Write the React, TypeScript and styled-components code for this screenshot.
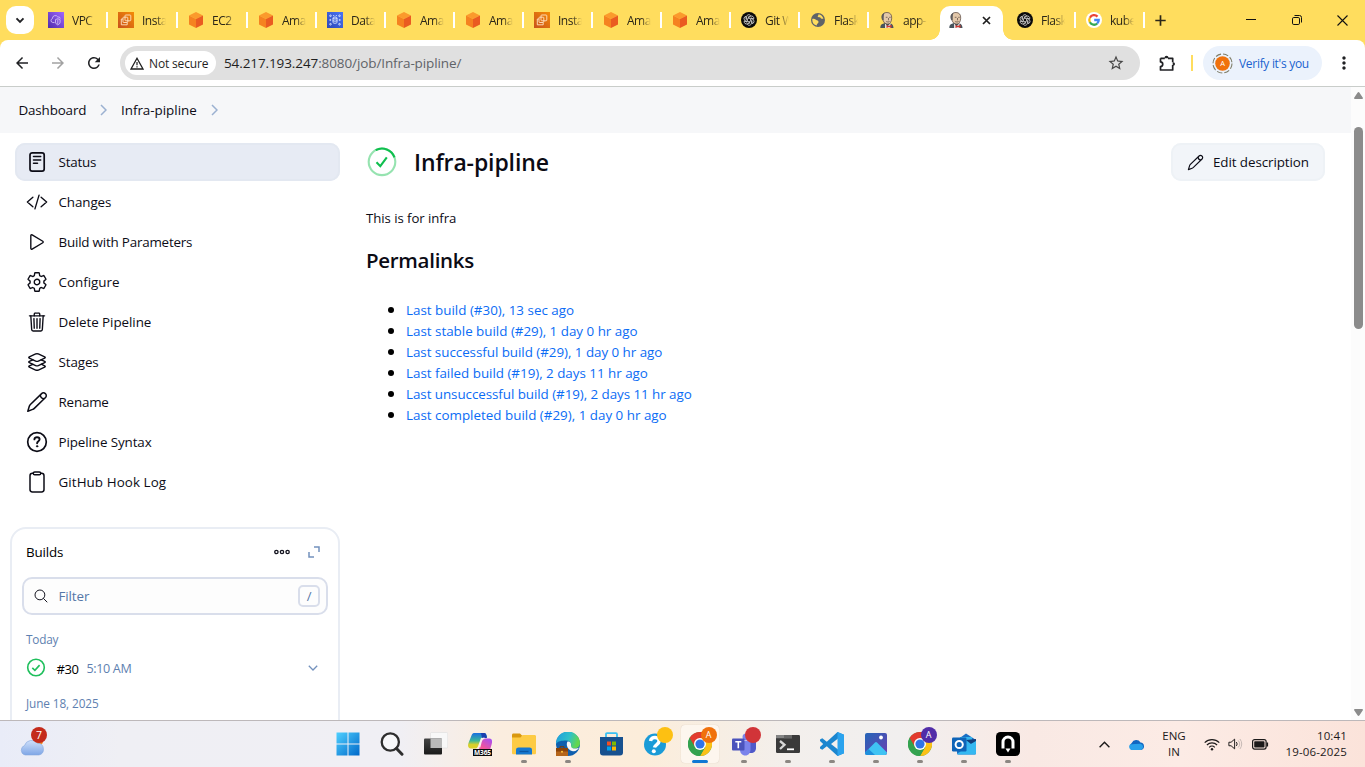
import React from 'react';
import styled, { createGlobalStyle, css } from 'styled-components';
import {
  IoCodeSlashOutline,
  IoPlayOutline,
  IoSettingsOutline,
  IoTrashOutline,
  IoLayersOutline,
  IoSearchOutline,
} from 'react-icons/io5';
import { MdArrowBack, MdArrowForward, MdRefresh, MdStarBorder, MdMoreVert } from 'react-icons/md';

const Global = createGlobalStyle`
  * { box-sizing: border-box; }
  html, body { margin: 0; padding: 0; }
  body { font-family: "Open Sans", "Noto Sans", sans-serif; color: #0c0c16; background: #fff; overflow: hidden; }
`;

const Screen = styled.div`
  width: 1365px;
  height: 767px;
  display: flex;
  flex-direction: column;
  overflow: hidden;
`;

/* ---------- browser frame ---------- */

const TabStrip = styled.div`
  height: 40px;
  flex: none;
  display: flex;
  align-items: center;
  background: #ffdd5e;
  padding-left: 6px;
`;

const TabSearch = styled.div`
  width: 28px;
  height: 28px;
  border-radius: 10px;
  background: #fff;
  display: flex;
  align-items: center;
  justify-content: center;
  margin-right: 2px;
`;

const Tab = styled.div<{ $w: number; $sep: boolean; $inset: number }>`
  width: ${p => p.$w}px;
  height: 16px;
  flex: none;
  display: flex;
  align-items: center;
  gap: 8px;
  padding-left: ${p => p.$inset}px;
  border-right: 2px solid ${p => (p.$sep ? '#fff' : 'transparent')};
  svg { flex: none; }
`;

const TabTitle = styled.span`
  width: 24px;
  padding-top: 1px;
  font-size: 12px;
  line-height: 16px;
  letter-spacing: -0.5px;
  white-space: nowrap;
  overflow: hidden;
  color: #2b2618;
  mask-image: linear-gradient(90deg, #000 58%, transparent 100%);
`;

const ActiveTab = styled.div`
  position: relative;
  align-self: flex-end;
  width: 63px;
  height: 34px;
  flex: none;
  margin: 0 0 0 2px;
  border-radius: 10px 10px 0 0;
  background: #fff;
  display: flex;
  align-items: center;
  padding: 0 12px 6px 8px;
  justify-content: space-between;
  &::before, &::after {
    content: '';
    position: absolute;
    bottom: 0;
    width: 10px;
    height: 10px;
  }
  &::before { left: -10px; background: radial-gradient(circle at 0 0, transparent 9.5px, #fff 10px); }
  &::after { right: -10px; background: radial-gradient(circle at 100% 0, transparent 9.5px, #fff 10px); }
`;

const NewTab = styled.div`
  width: 31px;
  display: flex;
  justify-content: center;
`;

const WindowControls = styled.div`
  margin-left: auto;
  display: flex;
`;

const WindowButton = styled.div`
  width: 46px;
  height: 40px;
  display: flex;
  align-items: center;
  justify-content: center;
  &:last-child { width: 45px; }
`;

const ToolbarBack = styled.div`
  flex: none;
  background: #ffdd5e;
`;

const Toolbar = styled.div`
  height: 47px;
  background: #fff;
  border-radius: 8px 8px 0 0;
  border-bottom: 1px solid #c9cdca;
  display: flex;
  align-items: center;
  padding: 0 11px 0 4px;
`;

const NavButton = styled.div<{ $dim?: boolean }>`
  width: 36px;
  flex: none;
  display: flex;
  justify-content: center;
  color: ${p => (p.$dim ? '#a2a2a2' : '#202124')};
`;

const Omnibox = styled.div`
  width: 1020px;
  height: 34px;
  flex: none;
  margin-left: 8px;
  border-radius: 17px;
  background: #e0e0e0;
  display: flex;
  align-items: center;
  padding: 0 15px 0 5px;
  & > svg:last-child { margin-left: auto; }
`;

const SecurityChip = styled.div`
  width: 91px;
  height: 24px;
  border-radius: 12px;
  background: #fff;
  display: flex;
  align-items: center;
  gap: 5px;
  padding-left: 5px;
  font-size: 12px;
  font-weight: 500;
  letter-spacing: -0.15px;
  white-space: nowrap;
  color: #1f1f1f;
`;

const Url = styled.div`
  margin-left: 8px;
  font-size: 13.5px;
  letter-spacing: -0.1px;
  color: #5f6368;
  white-space: nowrap;
  b { font-weight: 400; color: #1f1f1f; }
`;

const ExtensionsButton = styled.div`
  width: 36px;
  flex: none;
  margin-left: 9px;
  display: flex;
  justify-content: center;
`;

const ToolbarDivider = styled.div`
  width: 2px;
  height: 16px;
  flex: none;
  background: #ffdd5e;
  margin: 0 10px 0 6px;
`;

const ProfileChip = styled.div`
  width: 119px;
  height: 34px;
  flex: none;
  border-radius: 17px;
  background: #ebf2fc;
  display: flex;
  align-items: center;
  gap: 6px;
  padding-left: 9px;
  color: #1a63cf;
  font-size: 12px;
  letter-spacing: -0.3px;
  white-space: nowrap;
`;

const MenuDots = styled.div`
  margin-left: auto;
  display: flex;
`;

/* ---------- jenkins page ---------- */

const Viewport = styled.div`
  height: 633px;
  flex: none;
  display: flex;
  overflow: hidden;
`;

const Page = styled.div`
  width: 1351px;
  display: flex;
  flex-direction: column;
`;

const Scrollbar = styled.div`
  width: 14px;
  background: #fcfcfc;
  display: flex;
  flex-direction: column;
  align-items: center;
  padding: 5px 0 4px 1px;
`;

const ScrollThumb = styled.div`
  width: 9px;
  height: 202px;
  margin: 28px 0 auto;
  border-radius: 5px;
  background: #8b8b8b;
`;

const Breadcrumbs = styled.div`
  height: 46px;
  flex: none;
  background: #f6f7f9;
  display: flex;
  align-items: center;
  gap: 14px;
  padding-left: 18.5px;
  font-size: 13.4px;
`;

const Crumb = styled.span<{ $w: number; $ls: number }>`
  width: ${p => p.$w}px;
  white-space: nowrap;
  letter-spacing: ${p => p.$ls}px;
`;

const Columns = styled.div`
  display: flex;
  flex: 1;
`;

const Sidebar = styled.div`
  width: 340px;
  padding-top: 10px;
`;

const TaskList = styled.div`
  display: flex;
  flex-direction: column;
  gap: 2px;
  padding-left: 15px;
`;

const Task = styled.div<{ $active?: boolean; $ls?: number }>`
  height: 38px;
  border-radius: 10px;
  display: flex;
  align-items: center;
  gap: 10.5px;
  padding-left: 11px;
  font-size: 13.4px;
  letter-spacing: ${p => p.$ls ?? -0.1}px;
  ${p =>
    p.$active &&
    css`
      background: #e7ebf4;
      box-shadow: inset 0 0 0 2px #e3e8f1;
    `}
  svg { width: 22px; height: 22px; flex: none; }
`;

const BuildsCard = styled.div`
  margin: 26px 0 0 10px;
  height: 220px;
  border: 2px solid #e9edf4;
  border-radius: 16px;
  padding: 9px 10px 0;
`;

const CardHeader = styled.div`
  height: 28px;
  display: flex;
  align-items: center;
  padding: 0 8px 0 4px;
  font-size: 13.4px;
  letter-spacing: -0.15px;
  color: #000;
  svg:first-of-type { margin: 0 18px 0 auto; }
`;

const FilterBox = styled.div`
  height: 38px;
  margin-top: 11px;
  border: 2px solid #d9deeb;
  border-radius: 10px;
  background: #fdfdfd;
  display: flex;
  align-items: center;
  gap: 9.5px;
  padding: 0 6px 0 9px;
  font-size: 13.4px;
  letter-spacing: -0.1px;
  color: #5577a8;
`;

const KeyHint = styled.span`
  margin-left: auto;
  width: 22px;
  height: 22px;
  border: 2px solid #d9deeb;
  border-radius: 5px;
  display: flex;
  align-items: center;
  justify-content: center;
  font-size: 13px;
`;

const DayLabel = styled.div<{ $mt: number; $ls: number }>`
  margin-top: ${p => p.$mt}px;
  padding-left: 4px;
  height: 18px;
  line-height: 18px;
  font-size: 11.8px;
  letter-spacing: ${p => p.$ls}px;
  color: #5e7fb0;
`;

const BuildRow = styled.div`
  height: 28px;
  margin-top: 6px;
  display: flex;
  align-items: center;
  padding: 0 10px 0 4px;
  font-size: 13px;
  letter-spacing: -0.45px;
  color: #000;
  span { margin-left: 10.5px; padding-top: 1px; }
  time { margin-left: 8px; padding-top: 1px; color: #5e7fb0; font-size: 12.6px; letter-spacing: -0.35px; }
  & > svg:last-child { margin-left: auto; }
`;

const Main = styled.div`
  flex: 1;
  padding: 10px 26px 0 26px;
`;

const TitleBar = styled.div`
  height: 38px;
  display: flex;
  align-items: center;
  gap: 16px;
`;

const Title = styled.h1`
  margin: 0;
  font-size: 23px;
  font-weight: 600;
  letter-spacing: -0.12px;
  color: #0b0b14;
`;

const EditButton = styled.div`
  margin-left: auto;
  width: 154px;
  height: 38px;
  border-radius: 10px;
  background: #f2f5f9;
  box-shadow: inset 0 0 0 2px #eef2f6;
  display: flex;
  align-items: center;
  gap: 9px;
  padding-left: 16px;
  font-size: 13.4px;
  letter-spacing: -0.08px;
  white-space: nowrap;
`;

const Description = styled.div`
  margin-top: 27px;
  height: 20px;
  line-height: 20px;
  font-size: 13.2px;
  letter-spacing: -0.05px;
`;

const SectionTitle = styled.h2`
  margin: 18px 0 0;
  height: 30px;
  line-height: 29px;
  font-size: 20.5px;
  font-weight: 600;
  letter-spacing: -0.3px;
  color: #0b0b14;
`;

const Permalinks = styled.ul`
  margin: 23px 0 0;
  padding-left: 40px;
  line-height: 21px;
  font-size: 13.4px;
`;

const Permalink = styled.li<{ $ls: number }>`
  height: 21px;
  &::marker { font-size: 16px; color: #000; }
  a { color: #0b6cf5; letter-spacing: ${p => p.$ls}px; }
`;

/* ---------- taskbar ---------- */

const Taskbar = styled.div`
  height: 47px;
  flex: none;
  border-top: 1px solid #bdb8ba;
  background: linear-gradient(90deg, #e9ecf8 0, #efeff4 120px, #f0eff4 400px, #fbeddf 500px, #fcedda 640px, #f3efec 790px, #f1efef 900px, #f9e9e4 1030px, #fcebe5 1180px, #fbe3da 1365px);
  display: flex;
  align-items: center;
`;

const Widgets = styled.div`
  width: 325.500px;
  padding-left: 19px;
  height: 46px;
`;

const AppSlot = styled.div<{ $state?: 'open' | 'active' }>`
  position: relative;
  width: 44px;
  height: 46px;
  display: flex;
  align-items: center;
  justify-content: center;
  ${p =>
    p.$state === 'active' &&
    css`
      &::before {
        content: '';
        position: absolute;
        inset: 4px 3px;
        border-radius: 4px;
        background: #fdf6ee;
        box-shadow: 0 0 1px #cdbfb0;
      }
    `}
  ${p =>
    p.$state &&
    css`
      &::after {
        content: '';
        position: absolute;
        bottom: 4px;
        left: 50%;
        transform: translateX(-50%);
        width: ${p.$state === 'active' ? 16 : 6}px;
        height: 3px;
        border-radius: 2px;
        background: ${p.$state === 'active' ? '#0f78d4' : '#8c8782'};
      }
    `}
  svg { position: relative; }
`;

const Badge = styled.span<{ $bg: string; $x?: number }>`
  position: absolute;
  left: ${p => p.$x ?? 23}px;
  top: 6px;
  width: 16px;
  height: 16px;
  border-radius: 50%;
  background: ${p => p.$bg};
  color: #fff;
  font-size: 9px;
  line-height: 16px;
  text-align: center;
`;

const CountBadge = styled(Badge)`
  font-size: 10.5px;
`;

const WidgetIcon = styled.div`
  position: relative;
  width: 30px;
  height: 46px;
`;

const Tray = styled.div`
  margin-left: auto;
  height: 46px;
  display: flex;
  align-items: center;
  padding-right: 18px;
  color: #1c1a1a;
`;

const TrayItem = styled.div<{ $w: number }>`
  width: ${p => p.$w}px;
  display: flex;
  justify-content: center;
`;

const TrayText = styled.div<{ $w: number; $align: string; $size: number; $ls: number }>`
  width: ${p => p.$w}px;
  text-align: ${p => p.$align};
  font-size: ${p => p.$size}px;
  line-height: 16px;
  letter-spacing: ${p => p.$ls}px;
  white-space: nowrap;
`;

/* ---------- tab icons ---------- */

const CubeIcon = () => (
  <svg width="16" height="16" viewBox="0 0 16 16">
    <path d="M8 0l7 3.4L8 7 1 3.4z" fill="#fb9a2c" />
    <path d="M1 3.4L8 7v9l-7-3.6z" fill="#f58220" />
    <path d="M15 3.4L8 7v9l7-3.6z" fill="#ea5b21" />
  </svg>
);
const VpcIcon = () => (
  <svg width="16" height="16" viewBox="0 0 16 16">
    <defs><linearGradient id="vp" x1="0" y1="1" x2="1" y2="0"><stop stopColor="#4f2cab" /><stop offset="1" stopColor="#a166ff" /></linearGradient></defs>
    <rect width="16" height="16" fill="url(#vp)" />
    <path d="M6.500 10.500H4.800A2 2 0 0 1 4.400 6.600A2.900 2.900 0 0 1 9.800 5a2 2 0 0 1 2.500 1.500M7.500 7.600l2.300-.9 2.300.9v2.400c0 1.500-1 2.300-2.300 2.900C8.500 12.300 7.500 11.500 7.500 10zM9.800 7.500v4.500" fill="none" stroke="#dccdfb" strokeWidth=".8" />
  </svg>
);
const Ec2Icon = () => (
  <svg width="16" height="16" viewBox="0 0 16 16">
    <defs><linearGradient id="ec" x1="0" y1="1" x2="1" y2="0"><stop stopColor="#c8511b" /><stop offset="1" stopColor="#f58b06" /></linearGradient></defs>
    <rect width="16" height="16" fill="url(#ec)" />
    <g fill="none" stroke="#ffe3c4" strokeWidth=".9"><rect x="7" y="3" width="5.800" height="5.800" rx=".8" /><path d="M5 7H3.300v5.800h5.900V11" /><rect x="5" y="5.200" width="4.800" height="5.300" rx=".6" /></g>
  </svg>
);
const RdsIcon = () => (
  <svg width="16" height="16" viewBox="0 0 16 16">
    <defs><linearGradient id="rd" x1="0" y1="1" x2="1" y2="0"><stop stopColor="#2e48b8" /><stop offset="1" stopColor="#4a74f5" /></linearGradient></defs>
    <rect width="16" height="16" fill="url(#rd)" />
    <g fill="none" stroke="#e2eaff" strokeWidth=".9"><ellipse cx="8" cy="6" rx="2" ry="1" /><path d="M6 6v4.300c0 .6.900 1 2 1s2-.4 2-1V6M6 8.200c0 .6.900 1 2 1s2-.4 2-1" /><circle cx="3.500" cy="3.800" r=".8" /><circle cx="12.500" cy="3.800" r=".8" /><circle cx="3.500" cy="12.200" r=".8" /><circle cx="12.500" cy="12.200" r=".8" /><circle cx="3.300" cy="8" r=".6" /><circle cx="12.700" cy="8" r=".6" /><path d="M6.200 3.500h1M8.800 3.500h1" /></g>
  </svg>
);
const GptIcon = () => (
  <svg width="16" height="16" viewBox="0 0 16 16">
    <circle cx="8" cy="8" r="8" fill="#0a0a0a" />
    <g fill="none" stroke="#dcdcdc" strokeWidth=".75">
      {[0, 60, 120, 180, 240, 300].map(a => (
        <path key={a} transform={`rotate(${a} 8 8)`} d="M8 6.100L5.600 7.400V5A2.200 2.200 0 0 1 9.600 3.600L7 5.200" />
      ))}
    </g>
  </svg>
);
const GlobeIcon = () => (
  <svg width="16" height="16" viewBox="0 0 16 16">
    <circle cx="8" cy="8" r="7" fill="#5f6368" />
    <path d="M2.300 7c1.500-.4 2.700 0 3.700.8S8.500 8.500 8.500 10s-1.800 1.500-1.800 3.500C4 13 2.300 11 2.300 8zM8.500 2.200c.3 1.300-1.300 1.600-.7 2.600s2.200-.2 2.700 1 1.300 1 2.900 1C13 4.500 11 2.500 8.500 2.200z" fill="#ffdd5e" />
  </svg>
);
const JenkinsIcon = () => (
  <svg width="16" height="16" viewBox="0 0 16 16">
    <path d="M1.300 16c0-2.800 1-4 2.700-4.300l2-.7 5.500.6c2 .4 2.800 1.900 3 4.400z" fill="#48545c" />
    <path d="M6 11l2.500 3.500 3-3.500v5H6z" fill="#dfe2e2" />
    <path d="M3.400 5.500C2.800 2 5 .5 8 .5s5 2 4.700 5.700c-.2 3.600-1.700 5.900-3.900 5.900S4.500 10.500 4.200 8.500z" fill="#e3c8aa" stroke="#54433c" strokeWidth=".7" />
    <path d="M3.400 8.300C1.700 5.500 2.400 1.500 5.600.7 4.600 2.500 4.900 4.700 4.600 8z" fill="#5d5b5d" />
    <path d="M6.800 5.300h1.700M10.200 5.300h1.500M9.500 6v2.300M7.200 9.600q1.800.9 3.500 0" stroke="#54433c" strokeWidth=".7" fill="none" />
    <path d="M7.500 13l2.300 1 2.700-1.200v3L9.800 15l-2.300.9z" fill="#d33833" />
  </svg>
);
const GoogleIcon = () => (
  <svg width="16" height="16" viewBox="0 0 16 16">
    <circle cx="8" cy="8" r="8" fill="#fff" />
    <g fill="none" strokeWidth="2.300">
      <path d="M11.500 4.600A4.700 4.700 0 0 0 3.900 5.700" stroke="#ea4335" />
      <path d="M3.900 5.700a4.700 4.700 0 0 0 0 4.700" stroke="#fbbc05" />
      <path d="M3.900 10.300a4.700 4.700 0 0 0 7.300 1.200" stroke="#34a853" />
      <path d="M11.200 11.500A4.700 4.700 0 0 0 12.700 8H8.200" stroke="#4285f4" />
    </g>
  </svg>
);
const tabIcons = { cube: CubeIcon, vpc: VpcIcon, ec2: Ec2Icon, rds: RdsIcon, gpt: GptIcon, globe: GlobeIcon, jenkins: JenkinsIcon, google: GoogleIcon };

type TabData = { icon: keyof typeof tabIcons; title: string; w?: number; inset?: number };
const tabsBefore: TabData[] = [
  { icon: 'vpc', title: 'VPC', w: 72, inset: 12 },
  { icon: 'ec2', title: 'Insta', w: 70 },
  { icon: 'cube', title: 'EC2', w: 70 },
  { icon: 'cube', title: 'Ama' },
  { icon: 'rds', title: 'Data' },
  { icon: 'cube', title: 'Ama' },
  { icon: 'cube', title: 'Ama' },
  { icon: 'ec2', title: 'Insta' },
  { icon: 'cube', title: 'Ama' },
  { icon: 'cube', title: 'Ama' },
  { icon: 'gpt', title: 'Git W' },
  { icon: 'globe', title: 'Flask' },
  { icon: 'jenkins', title: 'app-' },
];
const tabsAfter: TabData[] = [
  { icon: 'gpt', title: 'Flask', w: 73, inset: 14 },
  { icon: 'google', title: 'kube' },
];

const TabItem = ({ tab, sep = true }: { tab: TabData; sep?: boolean }) => {
  const Icon = tabIcons[tab.icon];
  return (
    <Tab $w={tab.w ?? 69} $sep={sep} $inset={tab.inset ?? 10}>
      <Icon />
      <TabTitle>{tab.title}</TabTitle>
    </Tab>
  );
};

/* ---------- page icons ---------- */

const StatusDoc = () => (
  <svg viewBox="0 0 22 22" fill="none" stroke="currentColor" strokeLinecap="round">
    <rect x="4" y="1.800" width="14.200" height="18.400" rx="2.200" strokeWidth="1.700" />
    <path d="M7.500 5.500h7.200M7.500 9h7.200M7.500 12.200h4" strokeWidth="1.500" />
  </svg>
);
const Pencil = ({ size = 22 }: { size?: number }) => (
  <svg width={size} height={size} viewBox="0 0 22 22" fill="none" stroke="currentColor" strokeWidth="1.500" strokeLinejoin="round">
    <path d="M1.800 20.200l1.500-4.900c.2-.7.600-1.300 1.100-1.800L15.600 2.600a2.600 2.600 0 0 1 3.700 0l.2.200a2.600 2.600 0 0 1 0 3.700L8.300 17.400c-.5.500-1 .8-1.600 1z" />
    <path d="M14.300 4c.2 2.200 1.600 3.600 3.800 3.800" />
  </svg>
);
const Help = () => (
  <svg viewBox="0 0 22 22" fill="none" stroke="currentColor" strokeLinecap="round">
    <circle cx="11" cy="11" r="9.300" strokeWidth="1.700" />
    <path d="M8.400 8.400c0-1.300 1.100-2.100 2.600-2.100s2.600.8 2.600 2c0 1.800-2.500 1.900-2.500 3.900" strokeWidth="1.900" />
    <circle cx="11.100" cy="15.300" r=".7" fill="currentColor" strokeWidth=".9" />
  </svg>
);
const Clipboard = () => (
  <svg viewBox="0 0 22 22" fill="none" stroke="currentColor" strokeWidth="1.500">
    <rect x="4" y="2.300" width="14" height="18.600" rx="2.400" />
    <rect x="7.300" y=".9" width="7.400" height="2.900" rx="1.400" fill="#fff" />
  </svg>
);
const Chevron = ({ down }: { down?: boolean }) =>
  down ? (
    <svg width="10" height="6" viewBox="0 0 10 6"><path d="M.8.800L5 5l4.200-4.200" fill="none" stroke="#7391bd" strokeWidth="1.300" /></svg>
  ) : (
    <svg width="7" height="12" viewBox="0 0 7 12"><path d="M1 1l5 5-5 5" fill="none" stroke="#9bb1d1" strokeWidth="1.500" /></svg>
  );

const tasks = [
  { label: 'Status', icon: <StatusDoc />, active: true, ls: -0.2 },
  { label: 'Changes', icon: <IoCodeSlashOutline /> },
  { label: 'Build with Parameters', icon: <IoPlayOutline />, ls: -0.2 },
  { label: 'Configure', icon: <IoSettingsOutline />, ls: 0 },
  { label: 'Delete Pipeline', icon: <IoTrashOutline />, ls: -0.05 },
  { label: 'Stages', icon: <IoLayersOutline /> },
  { label: 'Rename', icon: <Pencil />, ls: -0.2 },
  { label: 'Pipeline Syntax', icon: <Help /> },
  { label: 'GitHub Hook Log', icon: <Clipboard />, ls: 0.08 },
];

const links: [string, number][] = [
  ['Last build (#30), 13 sec ago', 0],
  ['Last stable build (#29), 1 day 0 hr ago', -0.01],
  ['Last successful build (#29), 1 day 0 hr ago', -0.04],
  ['Last failed build (#19), 2 days 11 hr ago', -0.02],
  ['Last unsuccessful build (#19), 2 days 11 hr ago', -0.06],
  ['Last completed build (#29), 1 day 0 hr ago', 0],
];

/* ---------- taskbar icons ---------- */

const S = ({ children, w = 24 }: { children: React.ReactNode; w?: number }) => (
  <svg width={w} height={w} viewBox="0 0 24 24">{children}</svg>
);
const ChromeIcon = () => (
  <S>
    <circle cx="12" cy="12" r="12" fill="#34a24f" />
    <path d="M12 12L1.600 6A12 12 0 0 1 22.400 6z" fill="#e33b2e" />
    <path d="M12 12L22.400 6A12 12 0 0 1 12 24l5.200-9z" fill="#fbc116" />
    <path d="M12 6h10.400L17.200 15z" fill="#fbc116" />
    <path d="M1.600 6L12 6v6l-5.200 3z" fill="#e33b2e" />
    <path d="M1.600 6l5.200 9L12 24l5.200-9H7z" fill="#34a24f" />
    <path d="M1.600 6A12 12 0 0 0 12 24l-5.200-9z" fill="#34a24f" />
    <circle cx="12" cy="12" r="6" fill="#fff" />
    <circle cx="12" cy="12" r="4.600" fill="#2f74e8" />
  </S>
);
const StartIcon = () => (
  <S>
    <defs><linearGradient id="st" x1="0" y1="0" x2="1" y2="1"><stop stopColor="#4fd0ff" /><stop offset="1" stopColor="#0068c9" /></linearGradient></defs>
    <path d="M.5.500h11v11H.5zM12.500.5h11v11h-11zM.5 12.500h11v11H.5zM12.500 12.500h11v11h-11z" fill="url(#st)" />
  </S>
);
const SearchIcon = () => (
  <S><circle cx="10.300" cy="10" r="8.600" fill="#f8f8fa" stroke="#2e2e2e" strokeWidth="2.300" /><path d="M16.500 16.500l5.500 5.700" stroke="#2e2e2e" strokeWidth="3" strokeLinecap="round" /></S>
);
const TaskViewIcon = () => (
  <S>
    <defs><linearGradient id="tv" x1="0" y1="0" x2="0" y2="1"><stop stopColor="#444" /><stop offset="1" stopColor="#191919" /></linearGradient></defs>
    <rect x="6.500" y=".5" width="17.200" height="15.500" rx="1" fill="#f8f8f8" stroke="#dedede" strokeWidth=".6" />
    <rect x="0" y="6.500" width="18" height="16" rx="1" fill="url(#tv)" />
    <path d="M6.500 6.500H18V16H6.500z" fill="#b9b9b9" />
  </S>
);
const CopilotIcon = () => (
  <S>
    <defs>
      <linearGradient id="c1" x1="0" y1="0" x2="0" y2="1"><stop stopColor="#1a6fe0" /><stop offset=".5" stopColor="#3bb89a" /><stop offset=".75" stopColor="#d8d02a" /></linearGradient>
      <linearGradient id="c2" x1=".8" y1="0" x2=".3" y2=".7"><stop stopColor="#a84ff0" /><stop offset="1" stopColor="#f2559a" /></linearGradient>
    </defs>
    <path d="M7 1h9c2 0 2.500 1.500 3 4l-6 1-2.500 7c-1 3-2 3.500-4 3.500H3C0 16.500-.5 13.500.500 11l3-7.500C4.300 1.600 5 1 7 1z" fill="url(#c1)" />
    <path d="M12 1h4c2 0 2.500 2 3 5h-4c-2 0-1-5-3-5z" fill="#1b3fae" />
    <path d="M16 6.500h5.500c2.500 0 3 2.500 2.200 5.500l-2 7H10.500l2.500-9c.8-2.500 1.500-3.500 3-3.500z" fill="url(#c2)" />
    <path d="M16.500 6.300c-2.300 0-3 1.500-3.700 4l-1.300 5" stroke="#f7eeee" strokeWidth="1.600" fill="none" />
    <rect x="5" y="17" width="19" height="7" fill="#0b0b0b" />
    <text x="14.500" y="23" fontSize="6.500" fontWeight="700" fill="#fff" textAnchor="middle" fontFamily="Open Sans" textLength="17">M365</text>
  </S>
);
const FolderIcon = () => (
  <S>
    <path d="M0 3c0-1 .5-1.600 1.500-1.600H8L10.500 4H24v6H0z" fill="#d9980f" />
    <path d="M0 5.500h8.500l2-2.500h12c1 0 1.500.6 1.500 1.500V21c0 .8-.5 1.300-1.500 1.300H1.500C.5 22.300 0 21.800 0 21z" fill="#fdcb45" />
    <path d="M4 22.500V18c0-1.700 1-2.500 2.500-2.500h11c1.500 0 2.500.8 2.500 2.500v4.500z" fill="#1678cf" /><path d="M7.500 19.500h9" stroke="#0b57a4" strokeWidth="1.300" />
  </S>
);
const EdgeIcon = () => (
  <S>
    <defs><linearGradient id="ed" x1="0" y1="0" x2="1" y2=".3"><stop stopColor="#1c9be0" /><stop offset=".6" stopColor="#2fc1c8" /><stop offset="1" stopColor="#63d64e" /></linearGradient></defs>
    <circle cx="12" cy="12" r="12" fill="#0f5fae" />
    <path d="M0 12A12 12 0 0 1 24 11c0 4-3 5.500-6 5.500-2.500 0-3.500-1-3-2.500 1-3-1-5.500-5-5.500S1.500 9 0 12z" fill="url(#ed)" />
    <path d="M11.500 9.500c3 0 4 2 3.500 4.500 0 2 2 2.600 4 2.600 1.500 0 3-.4 4-1-1 2.500-4 4.400-7 3.400-4-1-6.500-6-4.500-9.500z" fill="#f7f6f4" />
    <rect x="0" y="16" width="12" height="8" fill="#b5651a" /><path d="M0 16h12v3.500H0z" fill="#8a4309" /><circle cx="6" cy="19.800" r="1" fill="#ffc83d" /><path d="M4 16v-1.300h4V16" fill="none" stroke="#7a3b08" />
  </S>
);
const StoreIcon = () => (
  <S>
    <path d="M6 5V2.200c0-.6.4-1 1-1h9c.6 0 1 .4 1 1V5" fill="none" stroke="#3ac0f2" strokeWidth="1.800" />
    <path d="M0 5h23v15.500c0 2-1 3-3 3H3c-2 0-3-1-3-3z" fill="#17518f" />
    <path d="M7 9.500h4v4H7z" fill="#f25022" /><path d="M12 9.500h4v4h-4z" fill="#7fba00" /><path d="M7 14.500h4v4H7z" fill="#00a4ef" /><path d="M12 14.500h4v4h-4z" fill="#ffb900" />
  </S>
);
const HelpAppIcon = () => (
  <S><circle cx="11" cy="12.500" r="11" fill="#1a9bd7" /><path d="M6.500 9c.5-5 9-4.500 8.500.5-.3 3-4 3-4.500 6" fill="none" stroke="#fff" strokeWidth="3.400" /><circle cx="9.800" cy="19.300" r="2" fill="#fff" /></S>
);
const TeamsIcon = () => (
  <S>
    <circle cx="14" cy="5" r="3.500" fill="#7b83eb" />
    <path d="M15 9h9v7c0 3-2 5-5 5h-4z" fill="#5059c9" />
    <path d="M8 9h10.500v8.500c0 3.300-2 6-5.200 6S8 21 8 17.500z" fill="#7b83eb" />
    <rect x="0" y="6.500" width="12.500" height="12" rx="1" fill="#4b53bc" /><path d="M3.300 9.700h6M6.300 9.700v6.500" stroke="#fff" strokeWidth="1.600" />
  </S>
);
const TerminalIcon = () => (
  <S>
    <rect y="3" width="24" height="18" rx="1.200" fill="#3a3a3a" /><path d="M0 6.300V4.200C0 3.500.5 3 1.200 3H16v3.300z" fill="#858585" /><path d="M8 3h8v3.300H8z" fill="#666" />
    <path d="M4 9l4.500 3.800L4 17" fill="none" stroke="#d8d8d8" strokeWidth="2.300" /><path d="M11 17.300h7" stroke="#fff" strokeWidth="1.800" />
  </S>
);
const CodeIcon = () => (
  <S><path d="M17.500 0L24 2.800v18.400L17.500 24 6.800 14.300 2.300 17.700 0 16.500V15L3.200 12 0 9V7.500l2.300-1.200 4.500 3.400zM18 6.500L11 12l7 5.500z" fill="#1c86cf" fillRule="evenodd" /><path d="M17.500 0L24 2.800v18.400L17.500 24z" fill="#2ba3ee" /></S>
);
const PhotosIcon = () => (
  <S>
    <defs><linearGradient id="ph" x1="0" y1="0" x2="1" y2="1"><stop stopColor="#2465b8" /><stop offset="1" stopColor="#6a3fb0" /></linearGradient></defs>
    <rect x="1" y="1" width="22" height="22" rx="2" fill="url(#ph)" />
    <path d="M1 20.500L11 10.500q1-1 2 0l10 10c0 1.500-.7 2.500-2 2.500H3c-1.300 0-2-1-2-2.500z" fill="#3fc3f3" /><path d="M1 20.500L4.500 17l6.500 6H3c-1.300 0-2-1-2-2.500z" fill="#1e8fdc" />
    <circle cx="17" cy="5.500" r="1.900" fill="#fff" />
  </S>
);
const OutlookIcon = () => (
  <S>
    <path d="M5 8l9-6.500L24 8v13c0 1-.6 1.600-1.600 1.600H6.500C5.500 22.600 5 22 5 21z" fill="#1a6fc4" />
    <path d="M8 5h12v10H8z" fill="#35b4ee" /><path d="M14 8l10-1v9z" fill="#123f7c" />
    <path d="M5 22l12-9 7-4v12c0 1-.6 1.600-1.600 1.600H6.500z" fill="#35b8f1" />
    <rect x="0" y="5.500" width="14.500" height="14" rx="1.200" fill="#0f64b8" /><circle cx="7.200" cy="12.500" r="3.600" fill="none" stroke="#fff" strokeWidth="2" />
  </S>
);
const PenAppIcon = () => (
  <S><rect width="24" height="24" rx="4.500" fill="#000" /><path d="M7 16.500V10a5 5 0 0 1 10 0v6.500" fill="none" stroke="#fff" strokeWidth="3" /><path d="M9.500 16.500h5L12 20.500z" fill="#fff" /></S>
);

const apps: { icon: React.ReactNode; state?: 'open' | 'active'; badge?: React.ReactNode }[] = [
  { icon: <StartIcon /> },
  { icon: <SearchIcon /> },
  { icon: <TaskViewIcon /> },
  { icon: <CopilotIcon /> },
  { icon: <FolderIcon />, state: 'open' },
  { icon: <EdgeIcon />, state: 'open' },
  { icon: <StoreIcon /> },
  { icon: <HelpAppIcon />, badge: <Badge $bg="#fdc012" /> },
  { icon: <ChromeIcon />, state: 'active', badge: <Badge $bg="#f0710c">A</Badge> },
  { icon: <TeamsIcon />, state: 'open', badge: <Badge $bg="#d13438" /> },
  { icon: <TerminalIcon />, state: 'open' },
  { icon: <CodeIcon />, state: 'open' },
  { icon: <PhotosIcon />, state: 'open' },
  { icon: <ChromeIcon />, state: 'open', badge: <Badge $bg="#512da8">A</Badge> },
  { icon: <OutlookIcon />, state: 'open' },
  { icon: <PenAppIcon />, state: 'open' },
];

const Extension = () => (
  <svg width="17" height="17" viewBox="0 0 17 17">
    <path d="M1.500 3.300h4.300M9 3.300h4.700v4M13.700 10v5H1.500v-3.500c3-.2 3-4.400 0-4.600V3.300" fill="none" stroke="#202124" strokeWidth="1.700" strokeLinejoin="round" />
    <path d="M5.500 3.300V2.700a2 2 0 0 1 4 0v.6zM13.700 7.300h.6a1.700 1.700 0 0 1 0 3.400h-.6z" fill="#202124" />
  </svg>
);

export default function App() {
  return (
    <Screen>
      <Global />
      <TabStrip>
        <TabSearch>
          <svg width="10" height="7" viewBox="0 0 10 7"><path d="M1.500 1.300L5 4.800l3.500-3.500" fill="none" stroke="#202124" strokeWidth="1.900" /></svg>
        </TabSearch>
        {tabsBefore.map((t, i) => <TabItem key={i} tab={t} sep={i < tabsBefore.length - 1} />)}
        <ActiveTab>
          <JenkinsIcon />
          <svg width="9" height="9" viewBox="0 0 9 9"><path d="M1 1l7 7M8 1L1 8" stroke="#1f1f1f" strokeWidth="1.700" /></svg>
        </ActiveTab>
        {tabsAfter.map((t, i) => <TabItem key={i} tab={t} />)}
        <NewTab>
          <svg width="11" height="11" viewBox="0 0 11 11"><path d="M5.500.3v10.400M.3 5.500h10.400" stroke="#2b2618" strokeWidth="1.700" /></svg>
        </NewTab>
        <WindowControls>
          <WindowButton><svg width="10" height="10" viewBox="0 0 10 10"><path d="M0 4.500h10" stroke="#111" /></svg></WindowButton>
          <WindowButton>
            <svg width="10" height="10" viewBox="0 0 10 10" fill="none" stroke="#111"><rect x=".5" y="2.500" width="7" height="7" rx="1.300" /><path d="M2.500.5H7.500a2 2 0 0 1 2 2v5" /></svg>
          </WindowButton>
          <WindowButton><svg width="11" height="11" viewBox="0 0 11 11"><path d="M.5.500l10 10M10.500.5l-10 10" stroke="#111" strokeWidth="1.100" /></svg></WindowButton>
        </WindowControls>
      </TabStrip>
      <ToolbarBack>
        <Toolbar>
          <NavButton><MdArrowBack size={18} /></NavButton>
          <NavButton $dim><MdArrowForward size={18} /></NavButton>
          <NavButton><MdRefresh size={18} /></NavButton>
          <Omnibox>
            <SecurityChip>
              <svg width="14" height="13" viewBox="0 0 14 13" fill="none" stroke="#1f1f1f"><path d="M7 1.300L13 12H1z" strokeWidth="1.300" /><path d="M7 5v3.300M7 9.200v1.300" strokeWidth="1.200" /></svg>
              Not secure
            </SecurityChip>
            <Url><b>54.217.193.247</b>:8080/job/Infra-pipline/</Url>
            <MdStarBorder size={18} color="#474747" />
          </Omnibox>
          <ExtensionsButton><Extension /></ExtensionsButton>
          <ToolbarDivider />
          <ProfileChip>
            <svg width="21" height="21" viewBox="0 0 21 21">
              <circle cx="10.500" cy="10.500" r="9.500" fill="none" stroke="#7d7b66" strokeWidth="1.100" strokeDasharray="5.500 2" />
              <circle cx="10.500" cy="10.500" r="7.300" fill="#f0710c" />
              <text x="10.500" y="13.300" fontSize="7.500" fill="#fff" textAnchor="middle" fontFamily="Open Sans">A</text>
            </svg>
            Verify it's you
          </ProfileChip>
          <MenuDots><MdMoreVert size={20} color="#202124" /></MenuDots>
        </Toolbar>
      </ToolbarBack>

      <Viewport>
        <Page>
          <Breadcrumbs>
            <Crumb $w={67.5} $ls={-0.15}>Dashboard</Crumb>
            <Chevron />
            <Crumb $w={75.5} $ls={-0.02}>Infra-pipline</Crumb>
            <Chevron />
          </Breadcrumbs>
          <Columns>
            <Sidebar>
              <TaskList>
                {tasks.map(t => (
                  <Task key={t.label} $active={t.active} $ls={t.ls}>{t.icon}{t.label}</Task>
                ))}
              </TaskList>
              <BuildsCard>
                <CardHeader>
                  Builds
                  <svg width="16" height="6" viewBox="0 0 16 6" fill="none" stroke="#14141f" strokeWidth="1.300"><circle cx="2.400" cy="3" r="1.650" /><circle cx="8" cy="3" r="1.650" /><circle cx="13.600" cy="3" r="1.650" /></svg>
                  <svg width="12" height="12" viewBox="0 0 12 12" fill="none" stroke="#7391bd" strokeWidth="1.500"><path d="M6 1h5v5M1 6v5h5" /></svg>
                </CardHeader>
                <FilterBox>
                  <IoSearchOutline size={16} color="#14141f" />
                  Filter
                  <KeyHint>/</KeyHint>
                </FilterBox>
                <DayLabel $mt={15} $ls={-0.2}>Today</DayLabel>
                <BuildRow>
                  <svg width="20" height="20" viewBox="0 0 20 20" fill="none" stroke="#1fbf5c" strokeWidth="1.600"><circle cx="10" cy="9.500" r="8.300" /><path d="M6.300 9.800l2.600 2.500 4.700-5.200" /></svg>
                  <span>#30</span>
                  <time>5:10 AM</time>
                  <Chevron down />
                </BuildRow>
                <DayLabel $mt={12} $ls={-0.1}>June 18, 2025</DayLabel>
              </BuildsCard>
            </Sidebar>
            <Main>
              <TitleBar>
                <svg width="32" height="32" viewBox="0 0 32 32" fill="none" strokeWidth="2.100">
                  <circle cx="16" cy="15.800" r="13.300" stroke="#96e3b0" />
                  <path d="M9.700 4.100A13.300 13.300 0 0 1 28.500 11.300" stroke="#0fbf4e" />
                  <path d="M10.500 16.300l3.800 3.900 6.500-8.800" stroke="#0fbf4e" />
                </svg>
                <Title>Infra-pipline</Title>
                <EditButton><Pencil size={17} />Edit description</EditButton>
              </TitleBar>
              <Description>This is for infra</Description>
              <SectionTitle>Permalinks</SectionTitle>
              <Permalinks>
                {links.map(([label, ls]) => <Permalink key={label} $ls={ls}><a>{label}</a></Permalink>)}
              </Permalinks>
            </Main>
          </Columns>
        </Page>
        <Scrollbar>
          <svg width="9" height="7" viewBox="0 0 9 7"><path d="M4.500 0Q5 0 5.500.800L9 6Q9 7 8 7H1Q0 7 0 6L3.500.800Q4 0 4.500 0z" fill="#8b8b8b" /></svg>
          <ScrollThumb />
          <svg width="9" height="7" viewBox="0 0 9 7"><path d="M4.500 7Q5 7 5.500 6.200L9 1Q9 0 8 0H1Q0 0 0 1l3.500 5.200Q4 7 4.500 7z" fill="#8b8b8b" /></svg>
        </Scrollbar>
      </Viewport>

      <Taskbar>
        <Widgets>
          <WidgetIcon>
            <svg width="28" height="46" viewBox="0 0 28 46">
              <defs><linearGradient id="cl" x1="0" y1="0" x2="0" y2="1"><stop stopColor="#cfe0fa" /><stop offset="1" stopColor="#7fa6e6" /></linearGradient></defs>
              <circle cx="20" cy="20" r="4" fill="#f98a1c" />
              <path d="M6 34a5 5 0 0 1-.5-9.500 7.500 7.500 0 0 1 13-2.300A6 6 0 0 1 20 34z" fill="url(#cl)" stroke="#86a8de" strokeWidth=".6" />
            </svg>
            <CountBadge $bg="#c42b1c" $x={12}>7</CountBadge>
          </WidgetIcon>
        </Widgets>
        {apps.map((a, i) => <AppSlot key={i} $state={a.state}>{a.icon}{a.badge}</AppSlot>)}
        <Tray>
          <TrayItem $w={32}><svg width="11" height="7" viewBox="0 0 11 7"><path d="M.6 6.200l4.900-5 4.900 5" fill="none" stroke="#1c1a1a" strokeWidth="1.400" /></svg></TrayItem>
          <TrayItem $w={32}>
            <svg width="16" height="11" viewBox="0 0 16 11"><path d="M4 11a4 4 0 0 1-.3-7A5 5 0 0 1 12.500 3.500 3.800 3.800 0 0 1 13 11z" fill="#1066c0" /><path d="M3.500 11A3.500 3.500 0 0 1 2 5.500L7 5l5.500-.3A3.300 3.300 0 0 1 13 11z" fill="#28a0ea" /></svg>
          </TrayItem>
          <TrayText $w={44} $align="center" $size={11.5} $ls={0}>ENG<br />IN</TrayText>
          <TrayItem $w={32}>
            <svg width="16" height="13" viewBox="0 0 16 13" fill="none" stroke="#1c1a1a" strokeWidth="1.100"><path d="M.7 4.700a10.300 10.300 0 0 1 14.600 0M2.900 7a7.200 7.200 0 0 1 10.200 0M5.200 9.300a4 4 0 0 1 5.600 0" /><circle cx="8" cy="11.300" r="1.200" fill="#1c1a1a" stroke="none" /></svg>
          </TrayItem>
          <TrayItem $w={15}>
            <svg width="17" height="14" viewBox="0 0 17 14" fill="none" stroke="#1c1a1a" strokeWidth="1.100"><path d="M1 5v4h2.500L7.500 12.500V1.500L3.500 5z" /><path d="M9.500 4.800a3.500 3.500 0 0 1 0 4.400" /><path d="M11.500 3a6 6 0 0 1 0 8M13.500 1.300a9 9 0 0 1 0 11.400" stroke="#c4b8b4" /></svg>
          </TrayItem>
          <TrayItem $w={34}>
            <svg width="17" height="11" viewBox="0 0 17 11"><rect x=".6" y=".6" width="13.500" height="9.500" rx="2" fill="none" stroke="#1c1a1a" strokeWidth="1.200" /><rect x="2.200" y="2.200" width="10.300" height="6.300" rx=".8" fill="#1c1a1a" /><path d="M15.300 3.500v4" stroke="#1c1a1a" strokeWidth="1.600" /></svg>
          </TrayItem>
          <TrayText $w={70} $align="right" $size={11.5} $ls={0.15}>10:41<br />19-06-2025</TrayText>
        </Tray>
      </Taskbar>
    </Screen>
  );
}
